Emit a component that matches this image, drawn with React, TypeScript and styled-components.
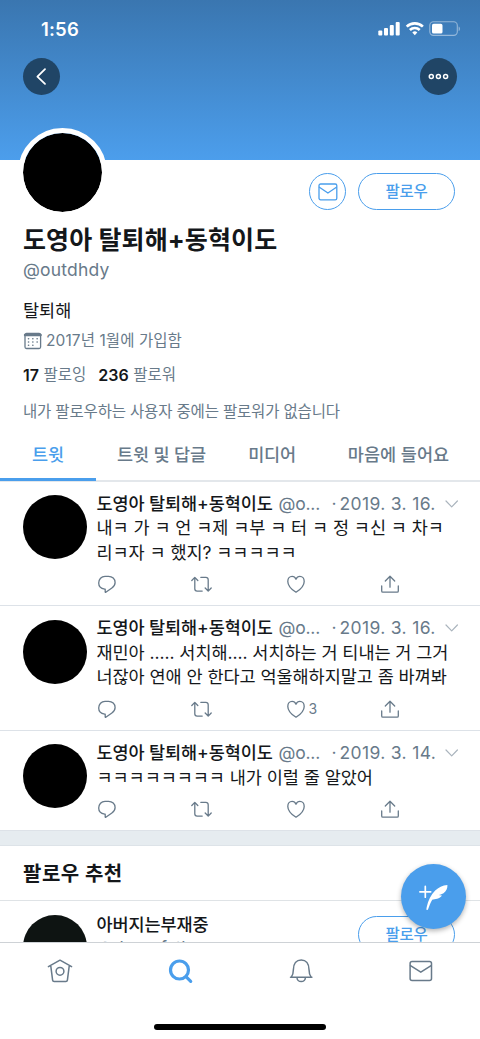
import React from 'react';
import styled, { createGlobalStyle } from 'styled-components';

const Global = createGlobalStyle`
  * { box-sizing: border-box; }
  body { margin: 0; background: #fff; }
  svg { display: block; flex: none; }
`;

const BLUE = '#4a9eec';
const GRAY = '#687a8a';
const INK = '#14171a';

const Screen = styled.div`
  width: 480px;
  height: 1039px;
  overflow: hidden;
  display: flex;
  flex-direction: column;
  position: relative;
  background: #fff;
  color: ${INK};
  font-family: Inter, 'Noto Sans CJK KR', sans-serif;
`;

const Feed = styled.main`
  height: 942px;
  overflow: hidden;
  flex: none;
`;

const Banner = styled.header`
  height: 160px;
  padding: 17px 23px 0;
  background: linear-gradient(#3a76b0, #4c9eec);
`;

const StatusBar = styled.div`
  height: 24px;
  display: flex;
  justify-content: space-between;
  align-items: center;
  margin-right: -4px;
  padding-left: 18px;
`;

const BannerButtons = styled.div`
  display: flex;
  justify-content: space-between;
  margin-top: 17px;
`;

const RoundButton = styled.button`
  width: 37px;
  height: 37px;
  border: 0;
  padding: 0;
  border-radius: 50%;
  background: #204566;
  display: grid;
  place-items: center;
`;

const Text = styled.span<{ $size: number; $lh?: number; $w?: number; $c?: string; $ls?: number }>`
  display: block;
  white-space: pre;
  font-size: ${p => p.$size}px;
  line-height: ${p => p.$lh ?? 24}px;
  font-weight: ${p => p.$w ?? 400};
  color: ${p => p.$c ?? INK};
  letter-spacing: ${p => p.$ls ?? 0}px;
`;

const Profile = styled.section`
  height: 272px;
  padding: 0 25px 0 23px;
`;

const ProfileTop = styled.div`
  display: flex;
  justify-content: space-between;
  align-items: flex-start;
  height: 63px;
`;

const ProfileAvatar = styled.div`
  width: 89px;
  height: 89px;
  margin: -32px 0 0 -5px;
  border: 5px solid #fff;
  border-radius: 50%;
  background: #000;
  background-clip: padding-box;
`;

const ProfileActions = styled.div`
  display: flex;
  gap: 12px;
  padding-top: 13px;
`;

const Outline = styled.button<{ $width: number }>`
  width: ${p => p.$width}px;
  height: 37px;
  padding: 0;
  border: 1px solid ${BLUE};
  border-radius: 19px;
  background: #fff;
  display: grid;
  place-items: center;
  font-family: inherit;
`;

const Line = styled.div<{ $h: number; $gap?: number }>`
  display: flex;
  align-items: center;
  height: ${p => p.$h}px;
  gap: ${p => p.$gap ?? 0}px;
`;

const Tabs = styled.nav`
  display: flex;
  height: 50px;
  border-bottom: 2px solid #e3e7eb;
`;

const Tab = styled.div<{ $width: number; $active?: boolean }>`
  width: ${p => p.$width}px;
  height: 49px;
  display: flex;
  justify-content: center;
  padding-top: 11px;
  border-bottom: 3px solid ${p => (p.$active ? BLUE : 'transparent')};
`;

const TweetRow = styled.article<{ $h: number; $top: number }>`
  display: flex;
  gap: 9.5px;
  height: ${p => p.$h}px;
  padding: ${p => p.$top}px 0 0 23px;
  border-bottom: 1px solid #dde2e8;
`;

const Avatar = styled.div<{ $c?: string }>`
  width: 64px;
  height: 64px;
  flex: none;
  border-radius: 50%;
  background: ${p => p.$c ?? '#000'};
`;

const TweetBody = styled.div`
  width: 378px;
  margin-top: -4px;
`;

const TweetHead = styled.div`
  display: flex;
  align-items: center;
  height: 25px;
`;

const Name = styled.div`
  width: 182px;
`;
const Handle = styled.div`
  width: 53px;
`;
const Dot = styled.div`
  width: 8px;
`;
const DateText = styled.div`
  width: 104.5px;
`;

const Copy = styled.div`
  padding-top: 0.4px;
`;

const Actions = styled.div`
  display: grid;
  grid-template-columns: repeat(4, 94.5px);
  align-items: center;
  height: 22px;
  margin-top: 7.6px;
`;

const Action = styled.div`
  display: flex;
  align-items: center;
  gap: 3px;
  height: 22px;
`;

const Divider = styled.div`
  height: 15px;
  background: #e6ecf0;
  border-bottom: 1px solid #dde3e8;
`;

const SectionTitle = styled.div`
  height: 55px;
  padding: 16px 23px 0;
  border-bottom: 1px solid #dfe3e6;
`;

const Suggestion = styled.div`
  display: flex;
  gap: 9.5px;
  padding: 14px 25px 0 23px;
`;

const SuggestionText = styled.div`
  flex: 1;
  margin-top: -2px;
`;

const SuggestionAction = styled.div`
  padding-top: 1px;
`;

const Fab = styled.button`
  position: absolute;
  left: 401px;
  top: 864px;
  width: 65px;
  height: 65px;
  border: 0;
  padding: 0;
  border-radius: 50%;
  background: ${BLUE};
  box-shadow: 0 2px 5px rgba(0, 0, 0, 0.3);
`;

const BottomBar = styled.footer`
  flex: 1;
  border-top: 1px solid #ced2d6;
  background: #fff;
  display: flex;
  flex-direction: column;
`;

const NavItems = styled.div`
  display: grid;
  grid-template-columns: repeat(4, 120.3px);
  height: 81px;
  padding-top: 14px;
  justify-items: center;
`;

const HomeIndicator = styled.div`
  width: 172px;
  height: 6px;
  border-radius: 3px;
  background: #000;
  align-self: center;
`;

const Stroke = ({ w, h, c = GRAY, s = 1.3, children }: { w: number; h: number; c?: string; s?: number; children: React.ReactNode }) => (
  <svg width={w} height={h} viewBox={`0 0 ${w} ${h}`} fill="none" stroke={c} strokeWidth={s} strokeLinecap="round" strokeLinejoin="round">
    {children}
  </svg>
);

const ReplyIcon = () => (
  <Stroke w={20} h={20}>
    <path d="M8.2 15.2H7.600C4.300 14.600 1.700 12.200 1.700 9c0-3.800 2.700-6.700 6.300-6.700h3.600c3.700 0 6.500 2.700 6.500 6.200 0 2.300-1.200 4.100-3.200 5.500l-6.100 4.300c-.3.200-.6 0-.6-.3z" />
  </Stroke>
);
const RetweetIcon = () => (
  <Stroke w={22} h={20}>
    <path d="M.8 6.500 3.800 3.400l3 3.100M3.800 3.700v11c0 1.500.9 2.400 2.300 2.400h5.100M20.200 14l-3 3.100-3-3.100M17.200 16.800V5.700c0-1.500-.9-2.400-2.300-2.400H9.800" />
  </Stroke>
);
const HeartIcon = () => (
  <Stroke w={20} h={20}>
    <path d="M10 18.200C5.200 15.200 1.800 11.300 1.800 7.400c0-3 1.900-5 4.300-5 1.800 0 3.100 1 3.900 2.800.8-1.800 2.100-2.800 3.900-2.800 2.400 0 4.300 2 4.300 5 0 3.900-3.400 7.800-8.200 10.800z" />
  </Stroke>
);
const ShareIcon = () => (
  <Stroke w={20} h={20}>
    <path d="M1.700 12v5c0 .8.4 1.200 1.200 1.200h14.200c.8 0 1.200-.4 1.200-1.200v-5M10 13.200V2.400M5.300 7 10 2.300 14.700 7" />
  </Stroke>
);

type TweetProps = { h: number; top?: number; date: string; lines: string[]; likes?: string };

const NAME = '도영아 탈퇴해+동혁이도';

const Tweet = ({ h, top = 13, date, lines, likes }: TweetProps) => (
  <TweetRow $h={h} $top={top}>
    <Avatar />
    <TweetBody>
      <TweetHead>
        <Name><Text $size={17.5} $w={500} $ls={-0.1}>{NAME}</Text></Name>
        <Handle><Text $size={17.5} $c={GRAY} $ls={-0.2}>@o...</Text></Handle>
        <Dot><Text $size={17.5} $c={GRAY}>·</Text></Dot>
        <DateText><Text $size={17.5} $c={GRAY} $ls={0.35}>{date}</Text></DateText>
        <Stroke w={16} h={10} c="#aab4bd" s={1.2}><path d="M2 2l5.700 5.800L13.400 2" /></Stroke>
      </TweetHead>
      <Copy>
        {lines.map(l => (
          <Text key={l} $size={17.5} $lh={24.5} $ls={-0.05}>{l}</Text>
        ))}
      </Copy>
      <Actions>
        <Action><ReplyIcon /></Action>
        <Action><RetweetIcon /></Action>
        <Action><HeartIcon />{likes && <Text $size={14} $c={GRAY}>{likes}</Text>}</Action>
        <Action><ShareIcon /></Action>
      </Actions>
    </TweetBody>
  </TweetRow>
);

const Count = ({ n, label }: { n: string; label: string }) => (
  <Line $h={24} $gap={4.5}>
    <Text $size={16} $w={600}>{n}</Text>
    <Text $size={15.5} $c={GRAY} $ls={0}>{label}</Text>
  </Line>
);

export default function App() {
  return (
    <Screen>
      <Global />
      <Feed>
        <Banner>
          <StatusBar>
            <Text $size={18.5} $w={600} $c="#fff" $lh={24} $ls={0.2}>1:56</Text>
            <svg width="84" height="18" viewBox="0 0 84 18" fill="#fff">
              <rect x="1.300" y="10.500" width="4" height="5" rx="1" />
              <rect x="7" y="8.100" width="4" height="7.400" rx="1" />
              <rect x="12.800" y="5.100" width="4" height="10.400" rx="1" />
              <rect x="18.700" y="2" width="4" height="13.500" rx="1" />
              <g fill="none" stroke="#fff" strokeWidth="2.600">
                <path d="M29.700 6.700a11.500 11.500 0 0 1 16.200 0" />
                <path d="M32.900 10a7 7 0 0 1 9.800 0" />
              </g>
              <path d="M37.800 15.200l-2.500-2.700a3.500 3.500 0 0 1 5 0z" />
              <rect x="52.800" y="1.800" width="27.500" height="13.600" rx="3.600" fill="none" stroke="#fff" strokeOpacity=".45" strokeWidth="1.100" />
              <rect x="55" y="3.800" width="10.500" height="9.700" rx="1.600" />
              <path d="M81.700 6.400c1.500.6 1.500 4 0 4.600z" opacity=".5" />
            </svg>
          </StatusBar>
          <BannerButtons>
            <RoundButton><Stroke w={37} h={37} c="#fff" s={1.8}><path d="M22 11.200l-7.600 7.400 7.600 7.200" /></Stroke></RoundButton>
            <RoundButton>
              <Stroke w={37} h={37} c="#fff" s={1.5}>
                <circle cx="11.300" cy="18.500" r="2" /><circle cx="18.400" cy="18.500" r="2" /><circle cx="25.600" cy="18.500" r="2" />
              </Stroke>
            </RoundButton>
          </BannerButtons>
        </Banner>
        <Profile>
          <ProfileTop>
            <ProfileAvatar />
            <ProfileActions>
              <Outline $width={37}>
                <Stroke w={20} h={18} c={BLUE}><rect x="1" y="1" width="17.800" height="15.800" rx="1.600" /><path d="M1.400 4.300l8.500 5.700 8.500-5.700" /></Stroke>
              </Outline>
              <Outline $width={97}><Text $size={15.5} $w={500} $c={BLUE} $ls={-0.3}>팔로우</Text></Outline>
            </ProfileActions>
          </ProfileTop>
          <Line $h={34}><Text $size={25} $w={700} $lh={34} $ls={0.12}>{NAME}</Text></Line>
          <Line $h={25}><Text $size={17.5} $c={GRAY} $ls={0.2}>@outdhdy</Text></Line>
          <Line $h={57}><Text $size={17.5} $ls={0}>탈퇴해</Text></Line>
          <Line $h={4} $gap={4}>
            <Stroke w={19} h={18}>
              <rect x="2" y="1.500" width="15.600" height="15" rx="1.500" /><path d="M2 3h15.600" strokeWidth="2.400" />
              <path d="M5.500 6.800h9M5.500 10h9M5.500 13.200h6" strokeWidth="1.600" strokeDasharray="0.1 4.2" />
            </Stroke>
            <Text $size={15.5} $c={GRAY} $ls={0.08}>2017년 1월에 가입함</Text>
          </Line>
          <Line $h={63} $gap={12}>
            <Count n="17" label="팔로잉" />
            <Count n="236" label="팔로워" />
          </Line>
          <Line $h={11}><Text $size={15.5} $c={GRAY} $ls={-0.17}>내가 팔로우하는 사용자 중에는 팔로워가 없습니다</Text></Line>
        </Profile>
        <Tabs>
          <Tab $width={96} $active><Text $size={17.5} $w={500} $c={BLUE} $ls={-0.2}>트윗</Text></Tab>
          <Tab $width={131}><Text $size={17.5} $w={500} $c={GRAY} $ls={-0.1}>트윗 및 답글</Text></Tab>
          <Tab $width={90}><Text $size={17.5} $w={500} $c={GRAY} $ls={-0.2}>미디어</Text></Tab>
          <Tab $width={163}><Text $size={17.5} $w={500} $c={GRAY} $ls={0}>마음에 들어요</Text></Tab>
        </Tabs>
        <Tweet h={124} date="2019. 3. 16." lines={['내ㅋ 가 ㅋ 언 ㅋ제 ㅋ부 ㅋ 터 ㅋ 정 ㅋ신 ㅋ 차ㅋ', '리ㅋ자 ㅋ 했지? ㅋㅋㅋㅋㅋ']} />
        <Tweet h={125} top={13.6} date="2019. 3. 16." likes="3" lines={['재민아 ..... 서치해.... 서치하는 거 티내는 거 그거', '너잖아 연애 안 한다고 억울해하지말고 좀 바껴봐']} />
        <Tweet h={100} top={13.4} date="2019. 3. 14." lines={['ㅋㅋㅋㅋㅋㅋㅋㅋ 내가 이럴 줄 알았어']} />
        <Divider />
        <SectionTitle><Text $size={20} $w={700} $ls={0.5}>팔로우 추천</Text></SectionTitle>
        <Suggestion>
          <Avatar $c="#0e1412" />
          <SuggestionText>
            <Text $size={17.5} $w={500} $ls={-0.1} $lh={23}>아버지는부재중</Text>
            <Text $size={17.5} $c={GRAY} $ls={-0.3} $lh={23}>@deux_father</Text>
          </SuggestionText>
          <SuggestionAction>
            <Outline $width={97}><Text $size={15.5} $w={500} $c={BLUE} $ls={-0.3}>팔로우</Text></Outline>
          </SuggestionAction>
        </Suggestion>
      </Feed>
      <BottomBar>
        <NavItems>
          <Stroke w={28} h={28} s={1.5}>
            <path d="M2.400 9.600 14 3.200l11.600 6.400M4.800 9.100l1.800 14c.1.900.6 1.400 1.500 1.400h11.800c.9 0 1.400-.5 1.500-1.400l1.800-14" /><circle cx="14" cy="14.300" r="3.900" />
          </Stroke>
          <Stroke w={28} h={28} c={BLUE} s={3.2}><circle cx="13.500" cy="13" r="9" /><path d="M20.200 19.900l4.500 4.400" /></Stroke>
          <Stroke w={28} h={28} s={1.5}>
            <path d="M3.500 20.200h21.400M4.200 20.200c1.700-2 2.200-4.200 2.200-7.600 0-6 3-9.700 7.800-9.700s7.800 3.700 7.800 9.700c0 3.400.5 5.600 2.200 7.600M10 20.400a4.200 4.200 0 0 0 8.400 0" />
          </Stroke>
          <Stroke w={28} h={28} s={1.5}><rect x="3.100" y="4.400" width="21.400" height="19.200" rx="2" /><path d="M3.500 8.600 13.800 15.200l10.300-6.600" /></Stroke>
        </NavItems>
        <HomeIndicator />
      </BottomBar>
      <Fab>
        <svg width="65" height="65" viewBox="0 0 65 65">
          <path d="M24.300 22.400v10.800M18.900 27.800h10.800" stroke="#fff" strokeWidth="1.700" strokeLinecap="round" />
          <path fill="#fff" d="M25.700 46c-.5-.2-.2-1.900.1-3.200 1.300-5.900 4-12.200 8.400-16.300 3.200-3 7.400-5.300 12.200-5.500.3 3.200-1.100 6.300-3.900 8.300-1.300.9-3 1.500-4.800 1.700 1.100.4 2.300.5 3.400.4-1.200 1.600-2.900 2.700-4.900 3.300-1.700.5-3.600.5-5 1.100-1.700 2.900-2.900 6.100-4 9.300-.2.700-.8 1.200-1.500.9z" />
        </svg>
      </Fab>
    </Screen>
  );
}
